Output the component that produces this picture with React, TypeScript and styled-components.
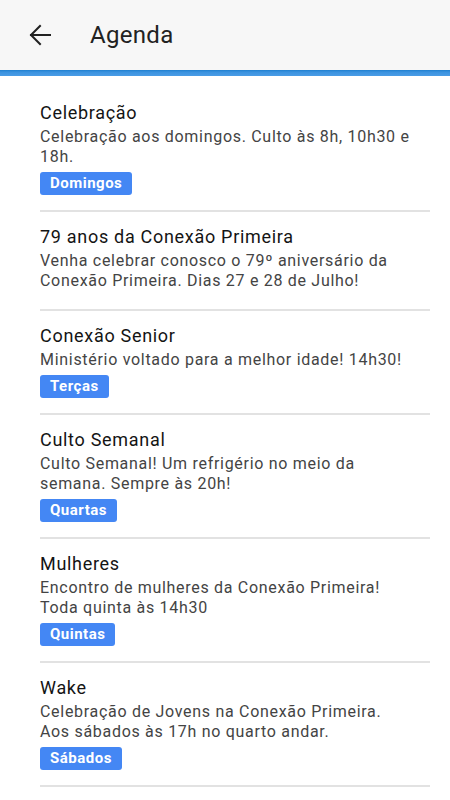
import React from "react";
import styled, { createGlobalStyle } from "styled-components";

const Global = createGlobalStyle`
  html, body { margin: 0; padding: 0; background: #fff; }
  body { font-family: Roboto, "Noto Sans", sans-serif; -webkit-font-smoothing: antialiased; }
`;

const Page = styled.div`
  width: 450px;
  min-height: 800px;
  background: #fff;
`;

const Header = styled.header`
  height: 70px;
  background: #f7f7f7;
  display: flex;
  align-items: center;
  padding-left: 28px;
  gap: 38px;
  box-sizing: border-box;
`;

const Bar = styled.div`
  height: 6px;
  background: linear-gradient(#1f7fcf 0%, #3a92df 35%, #4a9ce6 100%);
`;

const BackButton = styled.button`
  border: 0;
  background: transparent;
  padding: 0;
  width: 24px;
  height: 24px;
  display: flex;
  align-items: center;
  justify-content: center;
  color: #222;
`;

const Title = styled.h1`
  margin: 0;
  font-size: 24px;
  font-weight: 400;
  color: #222;
  letter-spacing: 0.3px;
`;

const List = styled.ul`
  list-style: none;
  margin: 12px 20px 0 40px;
  padding: 0;
`;

const Item = styled.li`
  padding: 14px 0 15px;
  border-bottom: 2px solid #e2e2e2;
  display: flex;
  flex-direction: column;
  align-items: flex-start;
`;

const ItemTitle = styled.div`
  font-size: 18px;
  line-height: 22px;
  color: #141414;
  letter-spacing: 0.7px;
`;

const ItemDesc = styled.div<{ $last?: boolean }>`
  margin-top: 3px;
  max-width: 374px;
  font-size: 16px;
  line-height: 20px;
  color: #444;
  letter-spacing: 0.7px;
  padding-bottom: ${(p) => (p.$last ? "3px" : "0")};
`;

const Badge = styled.span`
  margin-top: 5px;
  height: 23px;
  line-height: 23px;
  padding: 0 10px;
  background: #4487f4;
  color: #fff;
  font-weight: 700;
  font-size: 15px;
  letter-spacing: 0.5px;
  border-radius: 3px;
  box-sizing: border-box;
`;

const events = [
  {
    title: "Celebração",
    desc: "Celebração aos domingos. Culto às 8h, 10h30 e 18h.",
    badge: "Domingos",
  },
  {
    title: "79 anos da Conexão Primeira",
    desc: "Venha celebrar conosco o 79º aniversário da Conexão Primeira. Dias 27 e 28 de Julho!",
  },
  {
    title: "Conexão Senior",
    desc: "Ministério voltado para a melhor idade! 14h30!",
    badge: "Terças",
  },
  {
    title: "Culto Semanal",
    desc: "Culto Semanal! Um refrigério no meio da semana. Sempre às 20h!",
    badge: "Quartas",
  },
  {
    title: "Mulheres",
    desc: "Encontro de mulheres da Conexão Primeira! Toda quinta às 14h30",
    badge: "Quintas",
  },
  {
    title: "Wake",
    desc: "Celebração de Jovens na Conexão Primeira. Aos sábados às 17h no quarto andar.",
    badge: "Sábados",
  },
];

export default function App() {
  return (
    <Page>
      <Global />
      <Header>
        <BackButton aria-label="Voltar">
          <svg width="24" height="24" viewBox="0 0 24 24" fill="none">
            <path
              d="M22 12H3M12 3l-9 9 9 9"
              stroke="currentColor"
              strokeWidth="2"
              strokeLinecap="square"
            />
          </svg>
        </BackButton>
        <Title>Agenda</Title>
      </Header>
      <Bar />
      <List>
        {events.map((e) => (
          <Item key={e.title}>
            <ItemTitle>{e.title}</ItemTitle>
            <ItemDesc $last={!e.badge}>{e.desc}</ItemDesc>
            {e.badge && <Badge>{e.badge}</Badge>}
          </Item>
        ))}
      </List>
    </Page>
  );
}
